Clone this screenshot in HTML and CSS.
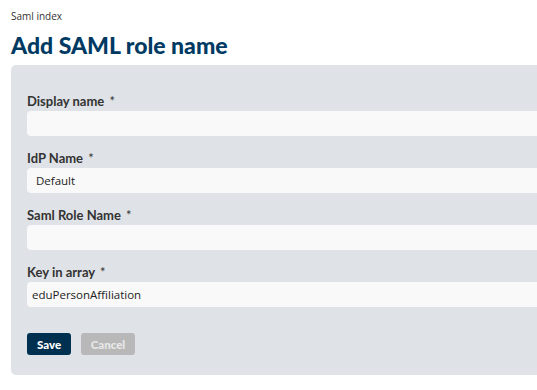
FILE: index.html
```html
<!DOCTYPE html>
<html>
<head>
<meta charset="utf-8">
<link rel="stylesheet" href="styles.css">
</head>
<body>
<div class="page">
  <div class="breadcrumb">Saml index</div>
  <h1 class="title">Add SAML role name</h1>
  <form class="panel">
    <div class="field">
      <label class="label">Display name <span class="req">*</span></label>
      <div class="input"></div>
    </div>
    <div class="field">
      <label class="label">IdP Name <span class="req">*</span></label>
      <div class="input select">Default</div>
    </div>
    <div class="field">
      <label class="label">Saml Role Name <span class="req">*</span></label>
      <div class="input"></div>
    </div>
    <div class="field">
      <label class="label">Key in array <span class="req">*</span></label>
      <div class="input">eduPersonAffiliation</div>
    </div>
    <div class="actions">
      <button type="button" class="btn btn-save">Save</button>
      <button type="button" class="btn btn-cancel">Cancel</button>
    </div>
  </form>
</div>
</body>
</html>
```
FILE: styles.css
```css
html, body {
  margin: 0;
  padding: 0;
  background: #ffffff;
  overflow: hidden;
}
.page {
  width: 537px;
  height: 390px;
  padding: 0 0 0 11px;
  box-sizing: border-box;
  overflow: hidden;
}
.breadcrumb {
  font-family: "Open Sans", "Noto Sans", sans-serif;
  font-size: 10px;
  color: #333;
  padding-top: 9px;
  line-height: 15px;
  height: 15px;
}
.title {
  font-family: Lato, sans-serif;
  font-weight: 900;
  font-size: 23px;
  color: #003a63;
  margin: 0 0 6px 0;
  padding-top: 7px;
  line-height: 28px;
  height: 28px;
}
.panel {
  width: 700px;
  background: #dfe2e6;
  border-radius: 5px;
  padding: 30px 0 20px 16px;
  box-sizing: border-box;
}
.field {
  margin-bottom: 16px;
}
.label {
  display: block;
  font-family: Lato, sans-serif;
  font-weight: 700;
  font-size: 13px;
  color: #333;
  line-height: 12px;
  height: 16px;
}
.req {
  font-weight: 400;
  margin-left: 2px;
}
.input {
  height: 25px;
  background: #f9f9f9;
  border-radius: 4px;
  font-family: "Open Sans", "Noto Sans", sans-serif;
  font-size: 11.5px;
  line-height: 25px;
  color: #222;
  padding-left: 5px;
}
.input.select {
  padding-left: 9px;
}
.actions {
  display: flex;
  gap: 10px;
  padding-top: 10px;
}
.btn {
  height: 22px;
  border: none;
  border-radius: 3px;
  font-family: Lato, sans-serif;
  font-weight: 900;
  font-size: 11.5px;
  padding: 0;
  cursor: pointer;
}
.btn-save {
  width: 44px;
  background: #00304f;
  color: #fff;
}
.btn-cancel {
  width: 54px;
  background: #b8b8b8;
  color: #e8e8e8;
}
```
